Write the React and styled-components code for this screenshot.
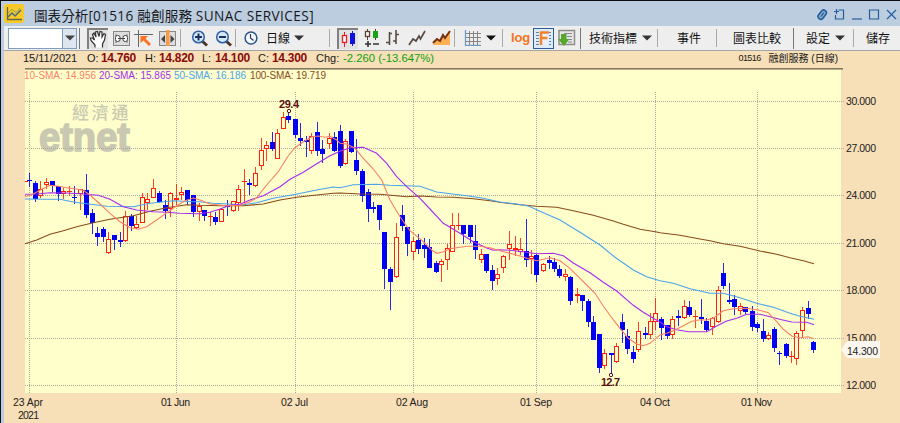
import React from 'react';
import styled, { createGlobalStyle } from 'styled-components';

const GlobalStyle = createGlobalStyle`
  body {
    margin: 0;
    background: #f7dfb7;
    font-family: "Liberation Sans", "Noto Sans CJK TC", sans-serif;
  }
  * { box-sizing: border-box; }
`;

const Window = styled.div`
  width: 900px;
  height: 423px;
  overflow: hidden;
  display: flex;
  flex-direction: column;
  border-top: 1px solid #0c0c10;
  border-left: 1px solid #10131c;
`;

const TitleBar = styled.div`
  height: 25px;
  flex: none;
  display: flex;
  align-items: center;
  padding: 0 2px 0 3px;
  background: #bccddf;
`;

const Title = styled.div`
  flex: 1;
  display: flex;
  margin-left: 10px;
  padding-top: 4px;
  font: 13.6px/20px "Open Sans", "Noto Sans CJK TC", sans-serif;
  color: #16181c;
  white-space: pre;
`;

const TitlePart = styled.span`
  letter-spacing: ${(p) => p.$track || 0}px;
`;

const Body = styled.div`
  flex: 1;
  display: flex;
  flex-direction: column;
  border-left: 3px solid #bccbe2;
`;

const ToolBar = styled.div`
  height: 25px;
  flex: none;
  display: flex;
  align-items: center;
  padding-left: 4px;
  background: #eeeeee;
  border-bottom: 1px solid #a6a6a6;
`;

const Combo = styled.div`
  width: 69px;
  height: 21px;
  display: flex;
  border: 1px solid #7f9dbd;
  background: #fff;
`;

const ComboButton = styled.div`
  width: 14px;
  margin-left: auto;
  display: flex;
  align-items: center;
  justify-content: center;
  border-left: 1px solid #7f9dbd;
  background: #dde5ee;
`;

const Sep = styled.div`
  width: 1px;
  height: ${(p) => (p.$dark ? 21 : 18)}px;
  margin-left: ${(p) => p.$gap}px;
  background: ${(p) => (p.$dark ? '#777' : '#a9a9a9')};
`;

const Tool = styled.div`
  width: ${(p) => p.$w}px;
  height: 21px;
  flex: none;
  margin-left: ${(p) => p.$gap}px;
  display: flex;
  align-items: center;
  justify-content: center;
`;

const PressedTool = styled(Tool)`
  background: #e2e2e2;
  border-top: 2px solid #808080;
  border-left: 2px solid #808080;
`;

const SelectedTool = styled(Tool)`
  background: #dcebfa;
  border: 1px solid #2d5f96;
`;

const Label = styled.div`
  width: ${(p) => p.$w}px;
  flex: none;
  margin-left: ${(p) => p.$gap}px;
  font: 12px/20px "Noto Sans CJK TC", sans-serif;
  color: #111;
  white-space: nowrap;
`;

const LogLabel = styled(Label)`
  font: bold 13px/20px "Liberation Sans", sans-serif;
  letter-spacing: -0.2px;
  color: #f9741a;
`;

const QuoteBar = styled.div`
  height: 17px;
  flex: none;
  display: flex;
  align-items: center;
  padding: 0 62px 2px 19px;
  font-size: 11px;
  line-height: 15px;
  color: #1a1a1a;
  white-space: pre;
`;

const Field = styled.span`
  width: ${(p) => p.$w}px;
  flex: none;
  letter-spacing: ${(p) => p.$track || 0}px;
`;

const Price = styled(Field)`
  font-size: 12px;
  font-weight: bold;
  letter-spacing: -0.3px;
  color: #8b0b0b;
`;

const Change = styled(Field)`
  font-size: 11.3px;
  color: #10a010;
`;

const Security = styled.span`
  margin-left: auto;
  display: flex;
  gap: 8px;
  font: 10px/15px "Liberation Sans", "Noto Sans CJK TC", sans-serif;
`;

const Code = styled.span`
  font-size: 9px;
  letter-spacing: -0.6px;
`;

const ChartArea = styled.div`
  flex: 1;
  background: #f7dfb7;
`;

const Watermark = styled.text`
  fill: #c9c9b2;
  font-weight: ${(p) => (p.$light ? 500 : 'bold')};
`;

const Tick = styled.text`
  font: 10.5px "Liberation Sans", sans-serif;
  fill: #222;
`;

const Extreme = styled.text`
  font: bold 11px "Liberation Sans", sans-serif;
  fill: #5a1010;
`;

const Legend = styled.text`
  font: 10px "Liberation Sans", sans-serif;
`;

// Bars are [x, high, low, bodyTop, bodyBottom, rising], in thirds of a pixel
// from the origin of each segment. The average lines use the same units.
const segments = [
  {
    left: 0, top: 80,
    bars: [
      [88, 278, 322, 299, 304, 0], [105, 303, 367, 308, 358, 0], [121, 303, 353, 328, 348, 1],
      [139, 295, 328, 307, 315, 1], [157, 303, 335, 303, 319, 0], [174, 317, 362, 319, 343, 0],
      [190, 325, 358, 334, 342, 1], [207, 318, 347, 333, 333, 1], [223, 318, 373, 351, 355, 0],
      [240, 328, 389, 328, 341, 1], [259, 283, 413, 331, 406, 0], [276, 388, 461, 399, 430, 0],
      [292, 440, 497, 458, 472, 0], [309, 440, 485, 448, 472, 0], [325, 457, 521, 478, 520, 1],
      [342, 464, 510, 464, 479, 0], [361, 457, 502, 479, 485, 0], [377, 392, 485, 407, 482, 1],
      [394, 401, 452, 407, 437, 0], [410, 407, 448, 433, 445, 1], [427, 340, 430, 352, 428, 1],
      [443, 340, 391, 356, 369, 1], [460, 297, 355, 325, 355, 1], [479, 334, 369, 339, 366, 0],
      [495, 360, 416, 374, 392, 0], [512, 336, 411, 340, 388, 1], [529, 313, 376, 355, 361, 1],
      [544, 322, 361, 336, 346, 1], [561, 331, 376, 331, 361, 0], [581, 346, 411, 346, 395, 0],
      [597, 370, 424, 377, 396, 1], [613, 390, 422, 390, 408, 0], [630, 395, 439, 409, 409, 1],
      [647, 395, 434, 411, 425, 0], [663, 384, 426, 386, 425, 1], [682, 360, 408, 376, 381, 0],
    ],
    sma10: [[75, 350], [100, 342], [125, 328], [150, 316], [175, 319], [200, 323], [225, 326], [250, 331], [270, 345], [300, 372], [330, 400], [360, 425], [390, 443], [415, 448], [440, 440], [470, 420], [500, 398], [530, 377], [555, 362], [580, 354]],
    sma20: [[75, 343], [110, 342], [150, 338], [200, 339], [250, 342], [295, 346], [330, 358], [370, 380], [410, 390], [460, 395], [500, 397], [540, 400], [590, 401]],
    sma50: [[75, 357], [130, 358], [180, 358], [220, 366], [260, 371], [320, 379], [400, 380], [450, 370], [520, 362], [580, 365]],
    sma100: [[75, 491], [110, 480], [150, 463], [190, 452], [230, 440], [280, 428], [330, 418], [400, 407], [450, 394], [500, 383], [560, 374]],
  },
  {
    left: 200, top: 90,
    bars: [
      [99, 334, 366, 334, 364, 1], [115, 284, 363, 298, 340, 1], [132, 238, 340, 273, 273, 1],
      [148, 267, 316, 279, 285, 0], [165, 232, 290, 250, 287, 1], [184, 144, 240, 181, 229, 1],
      [200, 154, 214, 166, 176, 1], [217, 127, 184, 157, 176, 0], [233, 117, 207, 128, 206, 1],
      [250, 67, 118, 82, 116, 1], [266, 66, 98, 78, 90, 0], [286, 88, 145, 88, 135, 0],
      [302, 98, 168, 144, 152, 0], [319, 138, 202, 151, 157, 0], [334, 130, 192, 139, 182, 1],
      [351, 97, 199, 127, 183, 0], [367, 150, 220, 176, 192, 0], [387, 130, 177, 145, 161, 1],
      [404, 127, 185, 142, 184, 0], [420, 105, 233, 124, 228, 0], [436, 146, 225, 154, 223, 1],
      [453, 123, 190, 123, 187, 0], [469, 148, 256, 210, 244, 0], [486, 237, 335, 243, 317, 0],
      [505, 298, 396, 306, 356, 0], [521, 337, 368, 351, 358, 0], [538, 344, 420, 344, 390, 0],
    ],
    sma10: [[0, 330], [30, 342], [80, 347], [120, 346], [150, 335], [170, 323], [200, 285], [235, 245], [265, 197], [285, 173], [310, 155], [335, 140], [355, 138], [375, 142], [390, 139], [410, 150]],
    sma20: [[0, 371], [30, 367], [60, 357], [90, 346], [120, 343], [150, 330], [190, 317], [240, 290], [270, 268], [310, 247], [350, 221], [390, 197]],
    sma50: [[0, 335], [40, 340], [130, 344], [170, 338], [220, 325], [280, 314], [350, 300], [400, 291]],
    sma100: [[0, 346], [60, 347], [130, 347], [190, 342], [240, 330], [290, 322], [350, 315], [400, 310]],
  },
  {
    left: 340, top: 110,
    bars: [
      [134, 366, 536, 366, 478, 0], [151, 472, 600, 476, 516, 0], [168, 340, 503, 382, 502, 1],
      [187, 286, 362, 314, 347, 0], [203, 352, 437, 352, 402, 0], [221, 382, 450, 394, 425, 1],
      [236, 371, 432, 389, 417, 0], [253, 383, 443, 405, 417, 0], [269, 386, 473, 410, 473, 0],
      [289, 453, 488, 458, 486, 0], [304, 447, 517, 452, 464, 1], [321, 403, 481, 415, 451, 1],
      [338, 310, 425, 345, 425, 1], [355, 310, 361, 346, 346, 1], [371, 345, 402, 345, 371, 0],
      [390, 346, 400, 346, 382, 0], [406, 344, 446, 393, 420, 0], [423, 418, 460, 433, 450, 1],
      [439, 432, 490, 432, 483, 0], [456, 464, 539, 481, 514, 0], [472, 473, 524, 493, 508, 1],
      [491, 435, 489, 439, 473, 1], [508, 362, 451, 402, 416, 1], [525, 378, 439, 415, 421, 1],
    ],
    sma10: [[0, 100], [20, 102], [45, 115], [70, 145], [100, 177], [125, 210], [150, 270], [180, 320], [210, 362], [250, 395], [275, 420], [290, 430], [310, 425], [330, 416], [380, 409], [420, 409], [450, 413]],
    sma20: [[0, 124], [30, 113], [70, 112], [110, 130], [140, 160], [170, 200], [200, 230], [240, 265], [270, 297], [310, 340], [360, 370], [400, 395], [440, 414], [460, 421]],
    sma50: [[0, 233], [40, 224], [110, 223], [150, 226], [240, 229], [290, 246], [380, 257], [430, 265]],
    sma100: [[0, 249], [60, 252], [120, 253], [200, 260], [240, 258], [290, 261], [340, 262], [400, 266], [450, 272]],
  },
  {
    left: 500, top: 200,
    bars: [
      [62, 115, 165, 146, 155, 1], [78, 58, 200, 153, 180, 0], [94, 150, 222, 167, 178, 1],
      [110, 162, 246, 164, 224, 0], [130, 190, 216, 193, 214, 1], [147, 167, 206, 181, 188, 0],
      [163, 175, 216, 186, 207, 0], [179, 194, 234, 206, 227, 0], [196, 208, 243, 223, 232, 1],
      [212, 228, 315, 231, 303, 0], [232, 263, 308, 281, 287, 1], [248, 285, 332, 285, 303, 0],
      [265, 297, 382, 304, 367, 0], [281, 348, 420, 367, 419, 0], [297, 402, 518, 403, 504, 0],
      [314, 447, 506, 458, 498, 1], [333, 458, 521, 458, 465, 0], [349, 430, 488, 437, 487, 1],
      [366, 343, 430, 367, 391, 0], [382, 387, 461, 408, 446, 0], [399, 439, 488, 456, 476, 0],
      [416, 367, 457, 394, 451, 1], [435, 381, 417, 400, 404, 0], [451, 340, 416, 363, 404, 1],
      [467, 293, 390, 338, 367, 1], [484, 351, 420, 356, 383, 0], [501, 375, 418, 375, 407, 0],
      [517, 347, 417, 358, 405, 1], [536, 329, 377, 349, 355, 0],
    ],
    sma10: [[0, 152], [30, 160], [60, 168], [90, 178], [110, 182], [150, 173], [180, 182], [210, 205], [240, 235], [260, 255], [285, 280], [310, 318], [335, 353], [360, 385], [385, 415], [410, 432], [430, 437], [450, 430], [470, 413]],
    sma20: [[0, 149], [30, 151], [70, 155], [110, 161], [160, 160], [190, 167], [220, 189], [270, 218], [310, 247], [350, 273], [400, 316], [430, 337], [465, 358]],
    sma50: [[0, 6], [50, 12], [85, 18], [120, 34], [180, 60], [240, 97], [300, 135], [345, 172], [400, 210], [440, 230]],
    sma100: [[0, 7], [60, 14], [110, 19], [170, 22], [220, 32], [280, 46], [340, 63], [370, 73], [420, 88], [470, 96]],
  },
  {
    left: 660, top: 240,
    bars: [
      [74, 179, 236, 198, 235, 1], [89, 182, 232, 201, 225, 0], [106, 210, 263, 229, 229, 1],
      [123, 176, 252, 230, 236, 0], [139, 235, 276, 243, 270, 0], [158, 230, 284, 235, 262, 1],
      [175, 138, 248, 151, 247, 1], [190, 69, 146, 99, 138, 0], [208, 130, 191, 181, 185, 0],
      [224, 166, 224, 178, 201, 0], [241, 188, 224, 199, 213, 1], [257, 200, 221, 202, 216, 0],
      [276, 198, 272, 214, 260, 0], [292, 245, 276, 251, 263, 0], [309, 237, 306, 272, 296, 0],
      [326, 275, 299, 284, 296, 1], [342, 262, 336, 266, 324, 0], [358, 334, 376, 338, 341, 0],
      [378, 308, 353, 313, 348, 0], [394, 333, 369, 347, 347, 1], [410, 272, 376, 279, 358, 1],
      [427, 201, 293, 211, 274, 1], [444, 184, 238, 204, 222, 0], [461, 302, 340, 305, 329, 0],
    ],
    sma10: [[0, 285], [20, 280], [45, 270], [70, 257], [95, 244], [120, 239], [140, 240], [160, 235], [190, 212], [220, 206], [260, 205], [300, 211], [325, 218], [350, 245], [370, 268], [395, 288], [420, 293], [445, 290], [462, 296]],
    sma20: [[0, 246], [20, 260], [50, 269], [85, 275], [140, 275], [170, 258], [200, 243], [230, 235], [260, 223], [300, 223], [330, 230], [365, 239], [395, 246], [440, 247], [462, 254]],
    sma50: [[0, 122], [40, 130], [90, 146], [150, 160], [190, 160], [240, 173], [290, 190], [340, 202], [390, 220], [420, 229], [462, 238]],
    sma100: [[0, -22], [60, -14], [120, -3], [150, 2], [190, 11], [240, 19], [300, 33], [350, 43], [390, 53], [430, 62], [462, 71]],
  },
];

const averages = [
  { key: 'sma100', color: '#8a4a1a', name: '100-SMA: 19.719', x: 250, w: 76 },
  { key: 'sma50', color: '#4ba3ee', name: '50-SMA: 16.186', x: 174, w: 72 },
  { key: 'sma20', color: '#a62bf0', name: '20-SMA: 15.865', x: 99, w: 72 },
  { key: 'sma10', color: '#fb7f68', name: '10-SMA: 14.956', x: 24, w: 72 },
];

const priceTicks = [
  [101, '30.000'], [148, '27.000'], [195, '24.000'], [243, '21.000'],
  [290, '18.000'], [338, '15.000'], [385, '12.000'],
];

const dateTicks = [
  [29, '23 Apr', 13, 30], [176, '01 Jun', 161, 29], [295, '02 Jul', 281, 27],
  [413, '02 Aug', 396, 32], [536, '01 Sep', 520, 32], [655, '04 Oct', 640, 30], [757, '01 Nov', 741, 31],
];

function linePoints(key) {
  return segments
    .map((s) => s[key].map(([x, y]) => `${(s.left + x / 3).toFixed(1)},${(s.top + y / 3).toFixed(1)}`).join(' '))
    .join(' ');
}

function Candle({ left, top, bar }) {
  const [bx, hi, lo, b1, b2, up] = bar;
  const x = Math.floor(left + bx / 3);
  const y = (v) => Math.round(top + v / 3);
  const color = up ? '#ff1e10' : '#0000f5';
  const h = Math.max(1, y(b2) - y(b1));
  return (
    <g>
      <rect x={x} y={y(hi)} width="1" height={Math.max(1, y(lo) - y(hi))} fill={color} opacity="0.85" />
      {up && h > 1
        ? <rect x={x - 1.5} y={y(b1) + 0.5} width="4" height={h - 1} fill="#ffffcc" stroke={color} />
        : <rect x={x - 2} y={y(b1)} width="5" height={h} fill={color} />}
    </g>
  );
}

function Chart() {
  return (
    <svg width="896" height="355" viewBox="4 68 896 355" display="block">
      <rect x="25" y="69" width="816" height="324" fill="#ffffcc" />
      <rect x="25" y="68" width="818" height="1.6" fill="#85775f" />
      <Watermark $light x="72" y="118.500" fontSize="17" letterSpacing="2.7" fontFamily="Noto Sans CJK TC">經濟通</Watermark>
      <Watermark x="39" y="150.500" fontSize="41" textLength="91" lengthAdjust="spacingAndGlyphs" fontFamily="Liberation Sans" stroke="#c9c9b2" strokeWidth="1.700">etnet</Watermark>
      <g stroke="#a9a99e" strokeDasharray="1 1">
        {priceTicks.map(([y]) => <line key={y} x1="25" x2="845" y1={y + 0.5} y2={y + 0.5} />)}
        {dateTicks.map(([x]) => <line key={x} x1={x + 0.5} x2={x + 0.5} y1="92" y2="393" />)}
      </g>
      <rect x="25" y="181" width="3" height="1" fill="#ff1e10" />
      {segments.map((s) => s.bars.map((bar) => (
        <Candle key={`${s.left}-${bar[0]}`} left={s.left} top={s.top} bar={bar} />
      )))}
      {averages.map((a) => (
        <polyline key={a.key} points={linePoints(a.key)} fill="none" stroke={a.color} strokeWidth="1.1" />
      ))}
      {averages.map((a) => (
        <Legend key={a.key} x={a.x} y="79" textLength={a.w} fill={a.color}>{a.name}</Legend>
      ))}
      <g fill="#fff" stroke="#5a1010">
        <circle cx="289" cy="111" r="1.7" />
        <circle cx="611" cy="375" r="1.7" />
      </g>
      <Extreme x="279" y="108" textLength="20">29.4</Extreme>
      <Extreme x="601" y="386" textLength="19">12.7</Extreme>
      {priceTicks.map(([y, text]) => <Tick key={text} x="846" y={y + 4} textLength="30">{text}</Tick>)}
      {dateTicks.map(([x, text, left, w]) => <Tick key={text} x={left} y="406" textLength={w}>{text}</Tick>)}
      <Tick x="18" y="419" textLength="21">2021</Tick>
      <path d="M841 349.500L847 341H880V358H847Z" fill="#fbf6ee" />
      <Tick x="847" y="355" textLength="31">14.300</Tick>
    </svg>
  );
}

function Arrow({ color = '#333' }) {
  return <svg width="10" height="6" viewBox="0 0 10 6"><path d="M0 .5H10L5 5.500Z" fill={color} /></svg>;
}

function Svg({ w = 18, h = 18, children }) {
  return <svg width={w} height={h} viewBox={`0 0 ${w} ${h}`} fill="none">{children}</svg>;
}

function AppIcon() {
  return (
    <Svg w={20} h={19}>
      <rect width="20" height="19" rx="3" fill="#fbc926" />
      <path d="M3.500 3V15.500H18" stroke="#5c6a50" strokeWidth="1.300" />
      <path d="M4 13L8 9L11 12L17 6" stroke="#466a80" strokeWidth="1.500" />
      <path d="M4 9L8 5.500L12 8.500L16 4" stroke="#8aa26b" strokeWidth="1" />
    </Svg>
  );
}

function WindowButtons() {
  return (
    <svg width="82" height="14" viewBox="0 0 82 14" fill="none" stroke="#255e9c" strokeWidth="1.200">
      <g transform="translate(0 .5) rotate(38 6 7)">
        <rect x="3.500" y="2" width="5.500" height="10" rx="2.700" fill="#87a9cc" strokeWidth="1.600" />
        <path d="M6.300 4.500V9.500" />
      </g>
      <path d="M22.500 3H27.500V12H19.500V8M18 4.500H23M20.500 2V7" />
      <path d="M36 12H46" />
      <path d="M53.500 3H62.500V12H53.500Z" />
      <path d="M71 3L80 12M80 3L71 12" />
    </svg>
  );
}

function HandIcon() {
  return (
    <Svg w={19} h={19}>
      <path d="M6 17.500V15L2 10.500L1.500 8L3.500 8L5.500 10L3.500 4.500L5 3L7 7L6.500 2L8.500 1.500L10 6.500L11 1.500L13 2L13 7L15 3.500L16.500 4.500L15.500 10L13.500 14V17.500" fill="#fff" stroke="#303030" strokeWidth="1.200" />
    </Svg>
  );
}

function SyncIcon() {
  return (
    <Svg w={17} h={15}>
      <rect x=".5" y=".5" width="16" height="14" fill="#ddd" stroke="#888" />
      <path d="M3 3V5M14 3V5M3 10V12M14 10V12" stroke="#777" />
      <rect x="2.500" y="4.500" width="4.500" height="6" rx="2" fill="#fff" stroke="#444" />
      <rect x="10" y="4.500" width="4.500" height="6" rx="2" fill="#fff" stroke="#444" />
      <path d="M5 7.500H12" stroke="#444" />
    </Svg>
  );
}

function CrossIcon() {
  return (
    <Svg w={19} h={17}>
      <path d="M0 4.500H19M4.500 0V17" stroke="#666" />
      <path d="M6.500 6H14L11.500 8.500L17 14L15 16L9.500 10.500L6.500 13Z" fill="#ff711c" />
    </Svg>
  );
}

function WidthIcon() {
  return (
    <Svg w={17} h={17}>
      <rect x=".5" y="1.500" width="16" height="14" fill="#ddd" stroke="#888" />
      <rect x="7" y="0" width="3.500" height="16" fill="#f79a48" />
      <path d="M6 5V13L2 9ZM11.500 5V13L15.500 9Z" fill="#444" />
    </Svg>
  );
}

function ZoomIcon({ plus }) {
  return (
    <Svg w={18} h={17}>
      <path d="M11 11L16 15.500" stroke="#4b3425" strokeWidth="3" />
      <circle cx="7.500" cy="7" r="5.800" fill="#d7e7f7" stroke="#2e62a3" strokeWidth="1.500" />
      <path d={plus ? 'M4 7H11M7.500 3.500V10.500' : 'M4 7H11'} stroke="#17345f" strokeWidth="2" />
    </Svg>
  );
}

function ClockIcon() {
  return (
    <Svg w={14} h={14}>
      <circle cx="7" cy="7" r="5.900" fill="#f6f9fc" stroke="#2c5686" strokeWidth="1.500" />
      <path d="M6.500 3V7L9.500 9.500" stroke="#243b59" strokeWidth="1.200" />
    </Svg>
  );
}

function CandleIcon() {
  return (
    <Svg w={17} h={18}>
      <path d="M4.500 2V17" stroke="#ef1b24" />
      <rect x="2.500" y="5.500" width="4" height="7" fill="#fff" stroke="#ef1b24" strokeWidth="1.300" />
      <path d="M12.500 1V16" stroke="#1010e0" />
      <rect x="10" y="3" width="5" height="11" fill="#1010e0" />
    </Svg>
  );
}

function PlusMinusIcon() {
  return (
    <Svg w={17} h={18}>
      <path d="M4.500 0V11M12.500 0V11" stroke="#5a4030" />
      <rect x="2.500" y="2.500" width="4" height="5" fill="#fff" stroke="#5a4030" strokeWidth="1.300" />
      <rect x="10" y="2" width="5" height="7" fill="#15a515" />
      <path d="M2 15H8M5 12V18M10 15H16" stroke="#333" strokeWidth="1.600" />
    </Svg>
  );
}

function BarsIcon() {
  return (
    <Svg w={14} h={17}>
      <path d="M3.500 2V15M0 12.500H3.500M3.500 3.500H6M10 0V14M7 11H10M10 4.500H13" stroke="#594d43" strokeWidth="1.600" />
    </Svg>
  );
}

function LineIcon() {
  return (
    <Svg w={18} h={16}>
      <path d="M1 15L5 9L8 11L11 6L12.500 9L17 1" stroke="#594b43" strokeWidth="1.700" />
    </Svg>
  );
}

function AreaIcon() {
  return (
    <Svg w={20} h={16}>
      <path d="M1 15L5 9L8 11L11 5L13 8L18 1V15Z" fill="#ffb052" />
      <path d="M1 13L5 9L8 11L11 5L13 8L18 1" stroke="#74300f" strokeWidth="2" />
    </Svg>
  );
}

function GridIcon() {
  return (
    <Svg w={18} h={16}>
      <path d="M1.500 0V15.500H17" stroke="#6f9cc5" strokeWidth="1.300" />
      <path d="M5.500 1V15M9.500 1V15M13.500 1V15M2 3.500H17M2 7.500H17M2 11.500H17" stroke="#858585" />
    </Svg>
  );
}

function FIcon() {
  return (
    <Svg w={17} h={18}>
      <path d="M1 3.500H16M1 6.500H16M1 9.500H16M1 12.500H16M1 15.500H16" stroke="#6683a3" />
      <rect x="4" y="2" width="10" height="14" fill="#e6effa" />
      <path d="M6 16V3.500H14M6 9H12.500" stroke="#f6822c" strokeWidth="2.500" />
    </Svg>
  );
}

function DownloadIcon() {
  return (
    <Svg w={18} h={18}>
      <rect x="1" y="1.500" width="15.500" height="14" fill="#e6e6e6" stroke="#8e8e8e" strokeWidth="1.500" />
      <path d="M6 4.500H14M9 7.500H14M10 10.500H14M10 13H14" stroke="#8a8a8a" />
      <path d="M3 5H8.500V10H11.500L6 17L0 10H3Z" fill="#55a82e" />
    </Svg>
  );
}

function Tools() {
  return (
    <ToolBar>
      <Combo><ComboButton><Arrow color="#444" /></ComboButton></Combo>
      <Sep $gap={2} $dark />
      <PressedTool $gap={7} $w={21}><HandIcon /></PressedTool>
      <Tool $gap={5} $w={17}><SyncIcon /></Tool>
      <Tool $gap={4} $w={19}><CrossIcon /></Tool>
      <Tool $gap={6} $w={17}><WidthIcon /></Tool>
      <Sep $gap={4} />
      <Tool $gap={10} $w={18}><ZoomIcon plus /></Tool>
      <Tool $gap={6} $w={18}><ZoomIcon /></Tool>
      <Sep $gap={2} />
      <Tool $gap={8} $w={14}><ClockIcon /></Tool>
      <Label $gap={8} $w={24}>日線</Label>
      <Tool $gap={4} $w={10}><Arrow /></Tool>
      <Sep $gap={25} />
      <PressedTool $gap={7} $w={21}><CandleIcon /></PressedTool>
      <Tool $gap={5} $w={17}><PlusMinusIcon /></Tool>
      <Tool $gap={6} $w={14}><BarsIcon /></Tool>
      <Tool $gap={8} $w={18}><LineIcon /></Tool>
      <Tool $gap={6} $w={20}><AreaIcon /></Tool>
      <Sep $gap={2} />
      <Tool $gap={9} $w={18}><GridIcon /></Tool>
      <Tool $gap={4} $w={10}><Arrow color="#111" /></Tool>
      <Sep $gap={6} />
      <LogLabel $gap={8} $w={20}>log</LogLabel>
      <SelectedTool $gap={2} $w={21}><FIcon /></SelectedTool>
      <Tool $gap={4} $w={18}><DownloadIcon /></Tool>
      <Sep $gap={4} $dark />
      <Label $gap={8} $w={49}>技術指標</Label>
      <Tool $gap={4} $w={10}><Arrow /></Tool>
      <Sep $gap={5} />
      <Label $gap={19} $w={25}>事件</Label>
      <Sep $gap={14} />
      <Label $gap={16} $w={49}>圖表比較</Label>
      <Sep $gap={11} $dark />
      <Label $gap={12} $w={25}>設定</Label>
      <Tool $gap={4} $w={10}><Arrow /></Tool>
      <Sep $gap={8} />
      <Label $gap={12} $w={25}>儲存</Label>
    </ToolBar>
  );
}

function Quote() {
  return (
    <QuoteBar>
      <Field $w={64}>15/11/2021</Field>
      <Field $w={14}>O:</Field>
      <Price $w={44}>14.760</Price>
      <Field $w={14}>H:</Field>
      <Price $w={43}>14.820</Price>
      <Field $w={13}>L:</Field>
      <Price $w={43}>14.100</Price>
      <Field $w={14}>C:</Field>
      <Price $w={44}>14.300</Price>
      <Field $w={27}>Chg:</Field>
      <Change $w={95}>-2.260 (-13.647%)</Change>
      <Security>
        <Code>01516</Code>
        <span>融創服務 (日線)</span>
      </Security>
    </QuoteBar>
  );
}

export default function App() {
  return (
    <>
      <GlobalStyle />
      <Window>
        <TitleBar>
          <AppIcon />
          <Title>
            <TitlePart>圖表分析</TitlePart>
            <TitlePart $track={0.3}>[01516 </TitlePart>
            <TitlePart $track={0.1}>融創服務 </TitlePart>
            <TitlePart $track={0.45}>SUNAC SERVICES]</TitlePart>
          </Title>
          <WindowButtons />
        </TitleBar>
        <Body>
          <Tools />
          <Quote />
          <ChartArea><Chart /></ChartArea>
        </Body>
      </Window>
    </>
  );
}
